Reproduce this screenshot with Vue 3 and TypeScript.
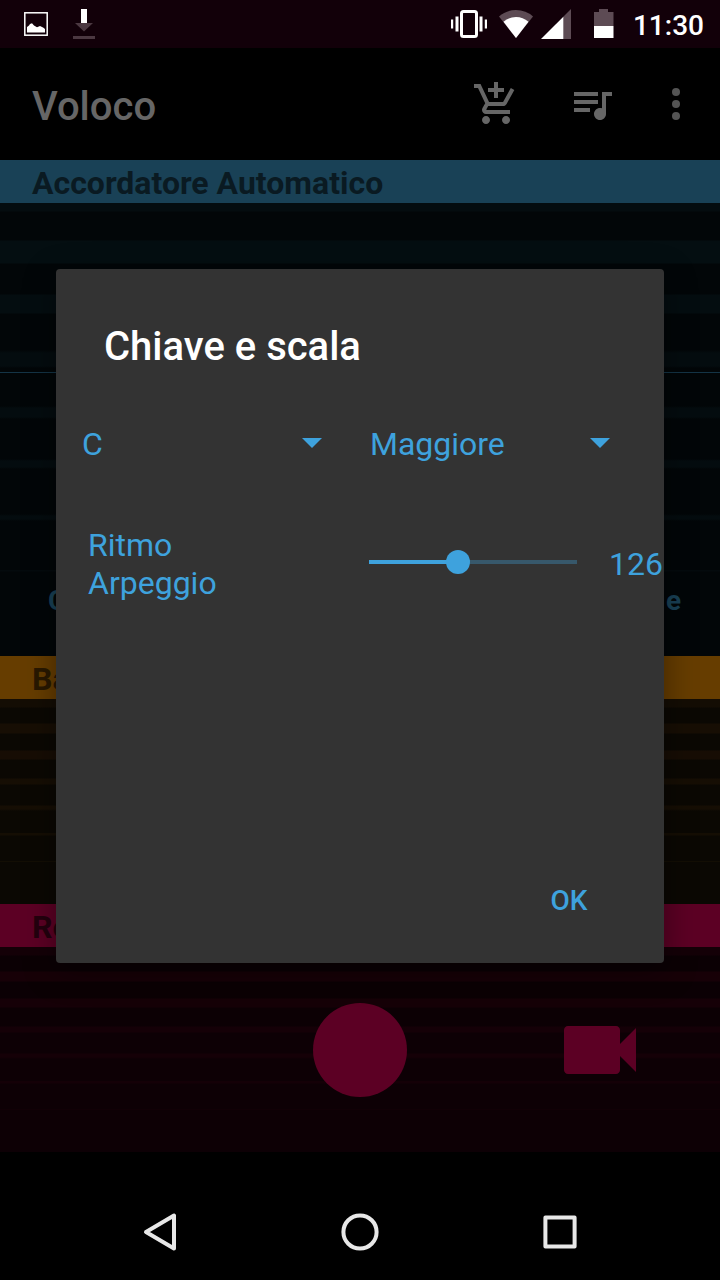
<script setup lang="ts">
import { computed, ref } from 'vue'

const keys: string[] = ['C', 'D', 'E', 'F', 'G', 'A', 'B']
const scales: string[] = ['Maggiore', 'Minore']

const key = ref<string>('C')
const scale = ref<string>('Maggiore')

const minTempo = 50
const maxTempo = 232
const tempo = ref<number>(126)
const tempoRatio = computed<number>(() => (tempo.value - minTempo) / (maxTempo - minTempo))
</script>

<template>
  <div class="screen">
    <header class="status">
      <svg width="24" height="24" viewBox="0 0 24 24" aria-hidden="true">
        <rect x="0.8" y="0.8" width="22.4" height="22.4" fill="none" stroke="#fff" stroke-width="1.5" />
        <path d="M3 20.5V15l2-1.500 1-1.500 2-.8 2 2.300 3 1.800 3-1.300 2 1 1.500.8L21 17v3.500z" fill="#fff" />
      </svg>
      <svg class="download" width="24" height="32" viewBox="0 0 24 32" aria-hidden="true">
        <path d="M9 1h6v14H9z" fill="#fff" />
        <path d="M3 15h18l-9 8.500zM1 28h22v3H1z" fill="#4b3841" />
      </svg>
      <span class="spacer"></span>
      <svg width="40" height="30" viewBox="0 0 40 30" fill="#fff" aria-hidden="true">
        <rect x="10.500" y="2.500" width="15" height="25" rx="2" fill="none" stroke="#fff" stroke-width="3" />
        <path d="M0 10.500h2.200v9H0zM4.500 7.500h3v15h-3zM28.500 7.500h3v15h-3zM33.800 10.500H36v9h-2.200z" />
      </svg>
      <svg width="34" height="30" viewBox="0 0 34 30" aria-hidden="true">
        <path d="M0 7.500Q7 1 17 1t17 6.500L17 29z" fill="#5d4b54" />
        <path d="M4.500 12.800Q10 8 17 8t12.500 4.800L17 29z" fill="#fff" />
      </svg>
      <svg width="30" height="30" viewBox="0 0 30 30" aria-hidden="true">
        <path d="M30 0v30H22V8z" fill="#5d4b54" />
        <path d="M0 30L22.300 7.700V30z" fill="#fff" />
      </svg>
      <svg width="35" height="30" viewBox="0 0 35 30" aria-hidden="true">
        <path d="M15 3h5V0h9v3h5.500v14H15z" fill="#5d4b54" />
        <path d="M15 17h19.500v12H15z" fill="#fff" />
      </svg>
      <time class="clock">11:30</time>
    </header>

    <div class="appbar">
      <h1 class="app-name">Voloco</h1>
      <button class="action" type="button" aria-label="Negozio">
        <svg width="48" height="48" viewBox="0 0 24 24" fill="#666">
          <path d="M11 9h2V6h3V4h-3V1h-2v3H8v2h3v3zm-4 9c-1.100 0-1.990.9-1.990 2S5.900 22 7 22s2-.9 2-2-.9-2-2-2zm10 0c-1.100 0-1.990.9-1.990 2s.89 2 1.990 2 2-.9 2-2-.9-2-2-2zm-9.830-3.250l.03-.12.9-1.630h7.450c.75 0 1.410-.41 1.750-1.030l3.860-7.010L19.420 4h-.01l-1.100 2-2.760 5H8.530l-.13-.27L6.160 6l-.95-2-.94-2H1v2h2l3.600 7.590-1.350 2.450c-.16.28-.25.61-.25.96 0 1.100.9 2 2 2h12v-2H7.420c-.13 0-.25-.11-.25-.25z" />
        </svg>
      </button>
      <button class="action" type="button" aria-label="Brani">
        <svg width="48" height="48" viewBox="0 0 24 24" fill="#666">
          <path d="M15 6H3v2h12V6zm0 4H3v2h12v-2zM3 16h8v-2H3v2zM17 6v8.180c-.31-.11-.65-.18-1-.18-1.660 0-3 1.340-3 3s1.340 3 3 3 3-1.340 3-3V8h3V6h-5z" />
        </svg>
      </button>
      <button class="action more" type="button" aria-label="Altro">
        <svg width="48" height="48" viewBox="0 0 24 24" fill="#545454">
          <circle cx="12" cy="6" r="2" />
          <circle cx="12" cy="12" r="2" />
          <circle cx="12" cy="18" r="2" />
        </svg>
      </button>
    </div>

    <h2 class="band blue">Accordatore Automatico</h2>
    <section class="tuner">
      <div class="tuner-labels"><span>C</span><span>e</span></div>
    </section>

    <h2 class="band orange">Ba</h2>
    <section class="backing"></section>

    <h2 class="band pink">Re</h2>
    <section class="recorder">
      <button class="record" type="button" aria-label="Registra"></button>
      <button class="video" type="button" aria-label="Video">
        <svg width="96" height="96" viewBox="0 0 24 24" fill="#5c0024">
          <path d="M17 10.500V7c0-.55-.45-1-1-1H4c-.55 0-1 .45-1 1v10c0 .55.45 1 1 1h12c.55 0 1-.45 1-1v-3.500l4 4v-11l-4 4z" />
        </svg>
      </button>
    </section>

    <nav class="navbar">
      <button type="button" aria-label="Indietro">
        <svg width="40" height="40" viewBox="0 0 40 40">
          <path d="M34 3.500v33L6 20z" />
        </svg>
      </button>
      <button type="button" aria-label="Home">
        <svg width="40" height="40" viewBox="0 0 40 40">
          <circle cx="20" cy="20" r="16.600" />
        </svg>
      </button>
      <button type="button" aria-label="Recenti">
        <svg width="40" height="40" viewBox="0 0 40 40">
          <rect x="5.400" y="5.400" width="29.200" height="29.200" />
        </svg>
      </button>
    </nav>

    <div class="overlay">
      <div class="dialog" role="dialog" aria-labelledby="dialog-title">
        <h2 id="dialog-title" class="dialog-title">Chiave e scala</h2>

        <div class="pickers">
          <div class="picker">
            <select v-model="key" aria-label="Chiave">
              <option v-for="k in keys" :key="k" :value="k">{{ k }}</option>
            </select>
            <svg width="20" height="12" viewBox="0 0 20 12" aria-hidden="true"><path d="M0 0h20L10 10z" fill="#3ea2dd" /></svg>
          </div>
          <div class="picker">
            <select v-model="scale" aria-label="Scala">
              <option v-for="s in scales" :key="s" :value="s">{{ s }}</option>
            </select>
            <svg width="20" height="12" viewBox="0 0 20 12" aria-hidden="true"><path d="M0 0h20L10 10z" fill="#3ea2dd" /></svg>
          </div>
        </div>

        <div class="tempo">
          <label for="tempo">Ritmo<br />Arpeggio</label>
          <input
            id="tempo"
            v-model.number="tempo"
            class="slider"
            type="range"
            :min="minTempo"
            :max="maxTempo"
            :style="{ '--ratio': tempoRatio }"
          />
          <output for="tempo">{{ tempo }}</output>
        </div>

        <div class="buttons">
          <button class="ok" type="button">OK</button>
        </div>
      </div>
    </div>
  </div>
</template>

<style>
body {
  margin: 0;
  background: #000;
}
</style>

<style scoped>
.screen {
  position: relative;
  display: flex;
  flex-direction: column;
  min-height: 100vh;
  background: #000;
  font-family: Roboto, "Liberation Sans", sans-serif;
}

button {
  display: flex;
  align-items: center;
  justify-content: center;
  margin: 0;
  padding: 0;
  border: 0;
  background: none;
  font-family: inherit;
}

svg {
  display: block;
  flex: none;
}

h1,
h2 {
  margin: 0;
}

.status {
  display: flex;
  align-items: center;
  gap: 8px;
  height: 48px;
  padding: 0 16px 0 24px;
  background: #120009;
}

.download {
  margin-left: 16px;
}

.spacer {
  flex: 1;
}

.clock {
  padding-top: 3px;
  margin-left: 11px;
  color: #fff;
  font-size: 28px;
  font-weight: 500;
  line-height: 32px;
}

.appbar {
  display: flex;
  align-items: center;
  height: 112px;
  padding: 0 8px 0 32px;
}

.app-name {
  flex: 1;
  padding-top: 6px;
  color: #666;
  font-size: 40px;
  font-weight: 500;
  line-height: 48px;
}

.action {
  width: 96px;
  height: 96px;
}

.action.more {
  width: 72px;
}

.band {
  height: 43px;
  padding: 0 32px;
  font-size: 32px;
  font-weight: 700;
  line-height: 46px;
}

.blue {
  background: #194156;
  color: #0a1a22;
}

.orange {
  background: #663d00;
  color: #291800;
}

.pink {
  background: #5c0024;
  color: #24000e;
}

.tuner {
  display: flex;
  flex: 1;
  flex-direction: column;
  justify-content: flex-end;
  min-height: 453px;
  box-sizing: border-box;
  padding: 0 39px 38px 48px;
  background: linear-gradient(
    #040c0f 8px, #020608 9px 37px,
    #040e11 38px 60px, #020608 61px 91px,
    #040d10 92px 110px, #020608 111px 147px,
    #040c0f 150px 163px, #020608 165px 169px,
    #143446 169px 170px, #020608 170px 203px,
    #040c0f 205px 214px, #020608 216px 256px,
    #040c0f 258px 264px, #020608 266px 311px,
    #040c0f 313px 316px, #020608 318px 367px,
    #040a0d 367px 368px, #020608 369px
  );
}

.tuner-labels {
  display: flex;
  justify-content: space-between;
  color: #194156;
  font-size: 28px;
  font-weight: 700;
  line-height: 34px;
}

.backing {
  height: 205px;
  background: linear-gradient(
    #140d04 8px, #0b0803 9px 24px,
    #170e04 25px 34px, #0b0803 35px 51px,
    #170d04 52px 60px, #0b0803 61px 79px,
    #160e04 80px 85px, #0b0803 86px 106px,
    #160e04 107px 110px, #0b0803 112px 134px,
    #150e04 134px 136px, #0b0803 137px 162px,
    #130e04 162px 163px, #0b0803 163px
  );
}

.recorder {
  display: grid;
  grid-template-columns: repeat(3, 1fr);
  align-items: center;
  justify-items: center;
  height: 205px;
  background: linear-gradient(
    #140007 8px, #0b0004 9px 24px,
    #170007 25px 34px, #0b0004 35px 51px,
    #160007 52px 60px, #0c0004 61px 79px,
    #150007 80px 85px, #0d0005 86px 106px,
    #150007 107px 110px, #0d0005 112px 134px,
    #140007 134px 136px, #0d0005 137px 162px,
    #110006 162px 163px, #0d0005 163px
  );
}

.record {
  grid-column: 2;
  width: 94px;
  height: 94px;
  border-radius: 50%;
  background: #5c0024;
}

.navbar {
  display: grid;
  grid-template-columns: repeat(3, 1fr);
  align-items: center;
  height: 96px;
  padding: 32px 60px 0;
}

.navbar button {
  height: 96px;
}

.navbar svg {
  fill: none;
  stroke: #e8e8e8;
  stroke-width: 4;
  stroke-linejoin: round;
}

.overlay {
  position: absolute;
  inset: 48px 0 96px;
  display: flex;
  align-items: center;
  padding: 0 56px;
}

.dialog {
  display: flex;
  flex: 1;
  flex-direction: column;
  min-width: 0;
  min-height: 694px;
  box-sizing: border-box;
  border-radius: 4px;
  background: #333;
  box-shadow: 0 8px 32px rgba(0, 0, 0, 0.4);
  color: #3ea2dd;
  font-size: 32px;
  line-height: 38px;
}

.dialog-title {
  padding: 54px 48px 0;
  color: #fff;
  font-size: 40px;
  font-weight: 500;
  line-height: 48px;
}

.pickers {
  display: grid;
  grid-template-columns: 1fr 1fr;
  gap: 48px;
  margin-top: 49px;
  padding: 0 54px 0 26px;
}

.picker {
  display: grid;
  align-items: center;
}

.picker select,
.picker svg {
  grid-area: 1 / 1;
}

.picker svg {
  justify-self: end;
  pointer-events: none;
}

.picker select {
  width: 100%;
  height: 48px;
  margin: 0;
  padding: 0 24px 0 0;
  border: 0;
  appearance: none;
  background: none;
  color: inherit;
  font-family: inherit;
  font-size: 32px;
}

.tempo {
  display: flex;
  align-items: center;
  margin-top: 58px;
  padding: 0 1px 0 32px;
}

.tempo label {
  flex: 1;
}

.slider {
  width: 208px;
  height: 24px;
  margin: 0 32px 4px 0;
  appearance: none;
  background: linear-gradient(
      to right,
      #3ea2dd calc(12px + (100% - 24px) * var(--ratio)),
      #37586b calc(12px + (100% - 24px) * var(--ratio))
    )
    center / 100% 4px no-repeat;
}

.slider::-webkit-slider-thumb {
  width: 24px;
  height: 24px;
  appearance: none;
  border-radius: 50%;
  background: #3ea2dd;
}

.buttons {
  display: flex;
  justify-content: flex-end;
  margin-top: auto;
  padding: 0 47px 27px;
}

.ok {
  width: 96px;
  height: 72px;
  color: #3ea2dd;
  font-size: 28px;
  font-weight: 500;
}
</style>
